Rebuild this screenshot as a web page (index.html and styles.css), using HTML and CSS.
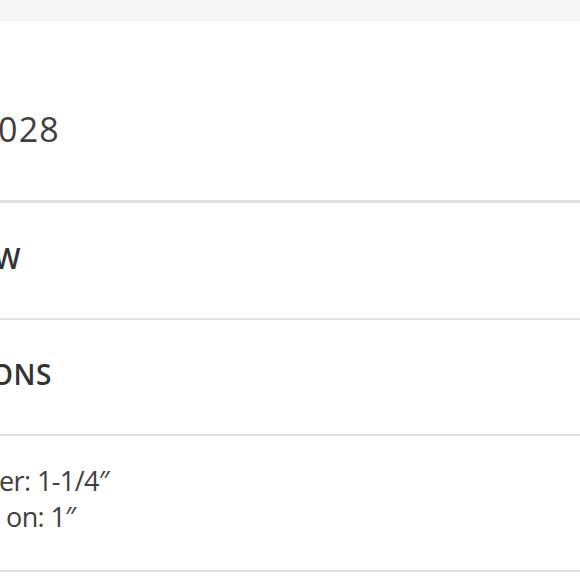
FILE: index.html
```html
<!DOCTYPE html>
<html lang="en">
<head>
<meta charset="utf-8">
<title>Product details</title>
<link rel="stylesheet" href="styles.css">
</head>
<body>
<div class="topbar"></div>
<main class="details">
  <section class="sku">
    <p class="sku-value">028</p>
  </section>
  <section class="panel panel-overview">
    <h2 class="panel-title title-overview">W</h2>
  </section>
  <section class="panel panel-titled">
    <h2 class="panel-title title-specs">ONS</h2>
  </section>
  <section class="panel panel-specs">
    <ul class="spec-list">
      <li class="spec spec-one">er: 1-1/4″</li>
      <li class="spec spec-two">on: 1″</li>
    </ul>
  </section>
</main>
</body>
</html>
```

FILE: styles.css
```css
html, body {
  margin: 0;
  padding: 0;
  background: #ffffff;
}

body {
  font-family: "Open Sans", "Noto Sans", sans-serif;
  color: #3b3b3b;
  overflow: hidden;
}

.topbar {
  height: 20px;
  background: #f7f7f7;
  border-bottom: 1px solid #efefef;
}

.details {
  display: flex;
  flex-direction: column;
}

.sku {
  padding: 88px 0 51px;
  border-bottom: 3px solid #e0e0e0;
}

.sku-value {
  margin: 0 0 0 -2px;
  font-size: 34px;
  line-height: 40px;
  font-weight: 400;
  letter-spacing: 1.2px;
  color: #404040;
}

.panel {
  border-bottom: 2px solid #e0e0e0;
  overflow: hidden;
}

.panel-overview {
  padding: 35px 0 40px;
}

.panel-titled {
  padding: 34px 0 40px;
}

.panel-title {
  margin: 0;
  font-size: 28px;
  line-height: 40px;
  font-weight: 600;
  letter-spacing: 0.5px;
  color: #333333;
  white-space: nowrap;
}

.title-overview {
  margin-left: -6px;
}

.title-specs {
  margin-left: -9px;
}

.panel-specs {
  padding: 27px 0 35px;
}

.spec-list {
  list-style: none;
  margin: 0;
  padding: 0;
}

.spec {
  font-size: 27px;
  line-height: 36px;
  letter-spacing: -0.6px;
  color: #404040;
  white-space: nowrap;
}

.spec-one {
  margin-left: -1px;
}

.spec-two {
  margin-left: 6px;
}
```
